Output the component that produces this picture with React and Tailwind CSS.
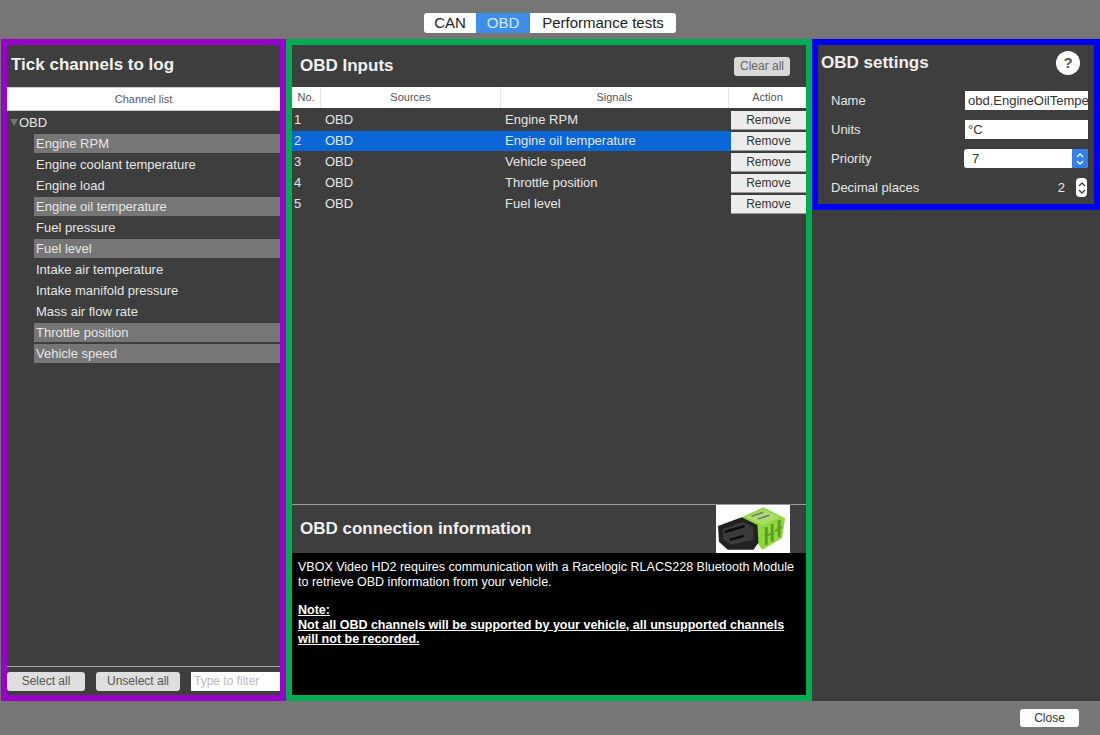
import React from 'react';

const channels = [
  { name: 'Engine RPM', on: true },
  { name: 'Engine coolant temperature' },
  { name: 'Engine load' },
  { name: 'Engine oil temperature', on: true },
  { name: 'Fuel pressure' },
  { name: 'Fuel level', on: true },
  { name: 'Intake air temperature' },
  { name: 'Intake manifold pressure' },
  { name: 'Mass air flow rate' },
  { name: 'Throttle position', on: true },
  { name: 'Vehicle speed', on: true }
];

const inputs = ['Engine RPM', 'Engine oil temperature', 'Vehicle speed', 'Throttle position', 'Fuel level'];

const Chevrons = ({ color }) => (
  <svg width="8" height="14" viewBox="0 0 8 14" fill="none" stroke={color} strokeWidth="1.4">
    <path d="M1 5l3-3 3 3M1 9l3 3 3-3" />
  </svg>
);

const ObdDongle = () => (
  <svg width="75" height="48" viewBox="0 0 75 48">
    <path d="M26 12L48 2l22 11-3 20-20 12-8-10z" fill="#8fd63f" />
    <path d="M30 12L48 4l16 8-16 8z" fill="#a9dc6b" />
    <path d="M36 11l12-4M42 14l12-4" stroke="#777" strokeWidth="1.5" />
    <path d="M2 21l24-9 16 8 1 18-5 7-26 0-9-8z" fill="#222" />
    <path d="M7 24l20-7 11 5 0 13-22 5-9-6z" fill="#3b3b3b" />
    <path d="M9 27l20-6M14 35l14-4" stroke="#0c0c0c" strokeWidth="2.5" />
    <path d="M51 22v18M57 19v18M64 15v17" stroke="#5f9e26" strokeWidth="3" />
    <path d="M49 31l10-3M60 26l7-4" stroke="#5f9e26" strokeWidth="2" />
  </svg>
);

const App = () => {
  return (
    <div className="w-[1100px] h-[735px] overflow-hidden flex flex-col bg-[#767676] font-['Liberation_Sans',sans-serif] text-[13px] text-[#e6e6e6]">
      <div className="h-[39px] shrink-0 flex justify-center pt-[13px]">
        <div className="flex h-[20px] rounded-[3px] overflow-hidden bg-white text-[15px] leading-[20px] text-[#222]">
          <div className="w-[52px] text-center">CAN</div>
          <div className="w-[54px] text-center bg-[#3b8eea] text-white/80">OBD</div>
          <div className="w-[146px] text-center">Performance tests</div>
        </div>
      </div>

      <div className="flex items-start pl-px">
        <div className="w-[285px] h-[662px] shrink-0 border-[6px] border-[#9900cc] bg-[#3e3e3e] flex flex-col">
          <div className="h-[42px] shrink-0 pl-[4px] pt-[7px] text-[17px] font-bold text-[#f0f0f0]">Tick channels to log</div>
          <div className="h-[24px] shrink-0 bg-white border-y border-[#cccccc] text-center text-[11px] leading-[22px] text-[#555]">Channel list</div>
          <div className="flex-1 pt-[1px]">
            <div className="flex items-center h-[21px]">
              <span className="ml-[3px] mr-[1px] w-0 h-0 border-x-[4px] border-x-transparent border-t-[7px] border-t-[#777]" />
              <span className="text-[13px]">OBD</span>
            </div>
            <div className="pl-[27px]">
              {channels.map((c) => (
                <div key={c.name} className="h-[21px] flex items-center">
                  <div className={`w-full h-[19px] pl-[2px] leading-[19px] ${c.on ? 'bg-[#767676]' : ''}`}>{c.name}</div>
                </div>
              ))}
            </div>
          </div>
          <div className="h-[29px] shrink-0 border-t border-[#a8a8a8] flex items-center gap-[11px]">
            <button className="w-[78px] h-[19px] rounded-[3px] bg-[#dedede] text-[#555] text-[12px]">Select all</button>
            <button className="w-[84px] h-[19px] rounded-[3px] bg-[#dedede] text-[#555] text-[12px]">Unselect all</button>
            <div className="flex-1 h-[19px] bg-white pl-[3px] text-[#bbb] text-[12px] leading-[19px]">Type to filter</div>
          </div>
        </div>

        <div className="w-[526px] h-[662px] shrink-0 border-[6px] border-[#00ad50] bg-[#3e3e3e] flex flex-col">
          <div className="h-[42px] shrink-0 flex items-center justify-between pl-[8px] pr-[16px]">
            <span className="text-[17px] font-bold text-[#f0f0f0]">OBD Inputs</span>
            <button className="w-[56px] h-[19px] rounded-[3px] bg-[#d8d8d8] text-[#666] text-[12px]">Clear all</button>
          </div>
          <div className="h-[21px] shrink-0 bg-white flex text-[11px] leading-[21px] text-[#555] text-center">
            <div className="w-[29px] border-r border-[#e4e4e4]">No.</div>
            <div className="w-[180px] border-r border-[#e4e4e4]">Sources</div>
            <div className="w-[228px] border-r border-[#e4e4e4]">Signals</div>
            <div className="flex-1">Action</div>
          </div>
          <div className="flex-1 pt-[1px]">
            {inputs.map((name, i) => (
              <div key={name} className="h-[21px] flex items-center">
                <div className={`flex-1 h-[20px] flex leading-[20px] ${i === 1 ? 'bg-[#0b67d8]' : ''}`}>
                  <div className="w-[33px] pl-[2px]">{i + 1}</div>
                  <div className="w-[180px]">OBD</div>
                  <div className="flex-1">{name}</div>
                </div>
                <button className="w-[75px] h-[19px] mt-[1px] bg-[#ececec] border-b border-[#999] text-[#333] text-[12px]">Remove</button>
              </div>
            ))}
          </div>
          <div className="h-[49px] shrink-0 border-t border-[#9a9a9a] flex items-center justify-between pl-[8px] pr-[16px]">
            <span className="text-[17px] font-bold text-[#f0f0f0]">OBD connection information</span>
            <div className="w-[74px] h-[48px] bg-white flex items-center justify-center"><ObdDongle /></div>
          </div>
          <div className="h-[142px] shrink-0 bg-black text-white text-[12.5px] leading-[14.5px] pl-[6px] pt-[7px]">
            <p>VBOX Video HD2 requires communication with a Racelogic RLACS228 Bluetooth Module<br />to retrieve OBD information from your vehicle.</p>
            <p className="mt-[14px] font-bold underline">Note:<br />Not all OBD channels will be supported by your vehicle, all unsupported channels<br />will not be recorded.</p>
          </div>
        </div>

        <div className="flex-1 flex flex-col h-[662px]">
          <div className="h-[171px] shrink-0 border-[6px] border-[#0000f0] bg-[#3e3e3e]">
            <div className="h-[36px] flex items-center justify-between pl-[3px] pr-[14px]">
              <span className="text-[17px] font-bold text-[#f0f0f0]">OBD settings</span>
              <span className="w-[24px] h-[24px] rounded-full bg-white text-[#555] text-[15px] font-bold text-center leading-[24px]">?</span>
            </div>
            <div className="pl-[13px] pr-[6px] pt-[10px] flex flex-col gap-[10px]">
              <div className="flex items-center justify-between h-[19px]">
                <span>Name</span>
                <div className="w-[123px] h-[19px] bg-white text-[#333] pl-[3px] leading-[19px] overflow-hidden whitespace-nowrap">obd.EngineOilTemper</div>
              </div>
              <div className="flex items-center justify-between h-[19px]">
                <span>Units</span>
                <div className="w-[123px] h-[19px] bg-white text-[#333] pl-[3px] leading-[19px]">°C</div>
              </div>
              <div className="flex items-center justify-between h-[19px]">
                <span>Priority</span>
                <div className="w-[124px] h-[19px] flex bg-white rounded-[3px] overflow-hidden text-[#333] leading-[19px]">
                  <div className="flex-1 pl-[8px]">7</div>
                  <div className="w-[16px] bg-[#2f80ed] flex items-center justify-center"><Chevrons color="#fff" /></div>
                </div>
              </div>
              <div className="flex items-center h-[19px]">
                <span className="flex-1">Decimal places</span>
                <span className="mr-[11px]">2</span>
                <div className="w-[11px] h-[19px] bg-white rounded-[4px] flex items-center justify-center mr-px"><Chevrons color="#444" /></div>
              </div>
            </div>
          </div>
          <div className="flex-1 bg-[#3e3e3e]" />
        </div>
      </div>

      <div className="flex-1 flex justify-end items-center pr-[21px]">
        <button className="w-[59px] h-[18px] rounded-[3px] bg-white text-[#333] text-[12px]">Close</button>
      </div>
    </div>
  );
};

export default App;
